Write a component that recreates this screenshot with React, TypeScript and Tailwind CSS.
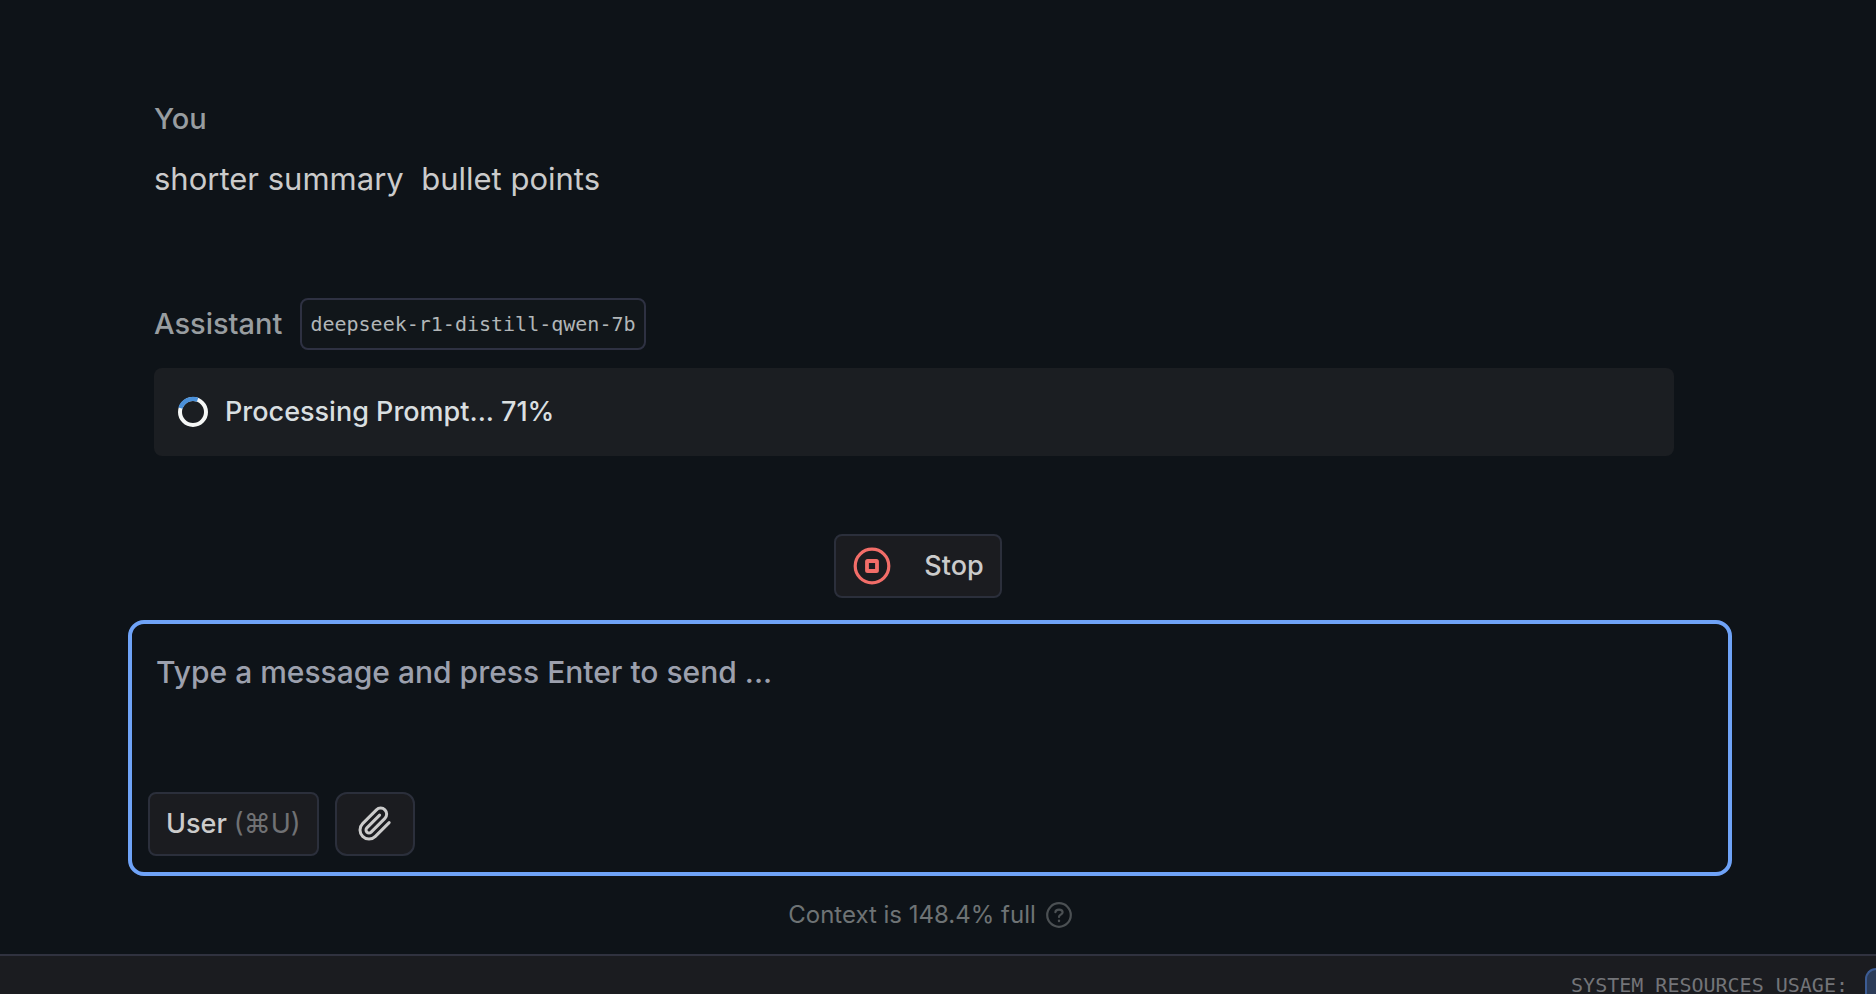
function Spinner() {
  return (
    <svg className="size-8 shrink-0" viewBox="0 0 32 32" fill="none" aria-hidden="true">
      <circle cx="16" cy="16" r="13" stroke="#f5f7f6" strokeWidth="4" />
      <path d="M3.5 12.2A13 13 0 0 1 20.6 3.8" stroke="#4a90d9" strokeWidth="4.4" />
    </svg>
  );
}

function StopIcon() {
  return (
    <svg className="size-10 shrink-0" viewBox="0 0 40 40" fill="none" stroke="#f26d68" aria-hidden="true">
      <circle cx="20" cy="20" r="16.8" strokeWidth="3.2" />
      <rect x="15" y="15" width="10" height="10" rx="0.6" strokeWidth="3.8" />
    </svg>
  );
}

function PaperclipIcon() {
  return (
    <svg className="size-9 shrink-0" viewBox="0 0 24 24" fill="none" stroke="currentColor" strokeWidth="2" strokeLinecap="round" strokeLinejoin="round" aria-hidden="true">
      <path d="M21.44 11.05l-9.19 9.19a6 6 0 0 1-8.49-8.49l9.19-9.19a4 4 0 0 1 5.66 5.66l-9.2 9.19a2 2 0 0 1-2.83-2.83l8.49-8.48" />
    </svg>
  );
}

function HelpIcon() {
  return (
    <svg className="size-[26px] shrink-0" viewBox="0 0 26 26" fill="none" stroke="#4b5053" strokeWidth="2.2" strokeLinecap="round" aria-hidden="true">
      <circle cx="13" cy="13" r="11.8" />
      <path d="M9.4 10.2C9.6 6.6 16.6 6.7 16.6 10.3C16.6 12.6 13 12.8 13 15" />
      <path d="M13 18.8v.2" strokeWidth="2.4" />
    </svg>
  );
}

export default function App() {
  return (
    <div className="flex min-h-screen flex-col bg-[#0e1318] font-['Inter',sans-serif] font-medium text-[#cbcbcb]">
      <main className="flex flex-1 flex-col pt-[97px] pr-36 pl-32">
        <section className="pl-[26px]">
          <h2 className="text-[29px] leading-11 text-[#989da0]">You</h2>
          <p className="mt-3.5 text-[31px] leading-12 font-normal whitespace-pre-wrap">{"shorter summary  bullet points"}</p>
        </section>

        <section className="mt-[95px] pr-[58px] pl-[26px]">
          <div className="flex items-center gap-[18px]">
            <h2 className="text-[29px] leading-11 text-[#989da0]">Assistant</h2>
            <span className="flex h-[52px] items-center rounded-lg border-2 border-[#2e3142] bg-[#11161a] px-2 font-['DejaVu_Sans_Mono',monospace] text-xl text-[#b2b6b8]">
              deepseek-r1-distill-qwen-7b
            </span>
          </div>
          <div role="status" className="mt-[18px] flex h-22 items-center gap-4 rounded-lg bg-[#1b1e22] px-[23px] text-[27px] leading-10 text-[#d9dfe0]">
            <Spinner />
            <span>Processing Prompt... 71%</span>
          </div>
        </section>

        <div className="mt-[78px] flex justify-center pr-6">
          <button type="button" className="flex h-16 items-center gap-8 rounded-lg border-2 border-[#2b2f3b] bg-[#1b1c20] px-4 text-[27px] leading-10">
            <StopIcon />
            Stop
          </button>
        </div>

        <form className="mt-[22px] flex h-64 flex-col rounded-2xl border-4 border-[#6fa3f7] px-4 pt-6 pb-4">
          <textarea
            aria-label="Message"
            placeholder="Type a message and press Enter to send ..."
            className="w-full flex-1 resize-none bg-transparent px-2 text-3xl leading-12 outline-none placeholder:text-[#9ca0ad]"
          />
          <div className="flex gap-4">
            <button type="button" className="flex h-16 items-center gap-[7px] rounded-lg border-2 border-[#2b2f3b] bg-[#1b1c20] px-4 text-[27px] leading-10">
              User <span className="font-normal text-[#707174]">(⌘U)</span>
            </button>
            <button type="button" aria-label="Attach file" className="flex h-16 w-20 items-center justify-center rounded-xl border-2 border-[#2b2f3b] bg-[#1b1c20]">
              <PaperclipIcon />
            </button>
          </div>
        </form>

        <div className="my-5 flex items-center justify-center gap-2.5 text-2xl leading-[38px] font-normal text-[#6e7375]">
          Context is 148.4% full
          <HelpIcon />
        </div>
      </main>

      <footer className="flex h-10 justify-end overflow-hidden border-t-2 border-[#30323f] bg-[#1b1c20] font-['DejaVu_Sans_Mono',monospace] text-xl whitespace-nowrap text-[#737478]">
        <span className="pt-5 leading-[18px]">SYSTEM RESOURCES USAGE:</span>
        <span className="mt-3 ml-[17px] h-12 w-[11px] rounded-tl-xl border-t-2 border-l-2 border-[#3c5c94] bg-[#2c3c58]" />
      </footer>
    </div>
  );
}
